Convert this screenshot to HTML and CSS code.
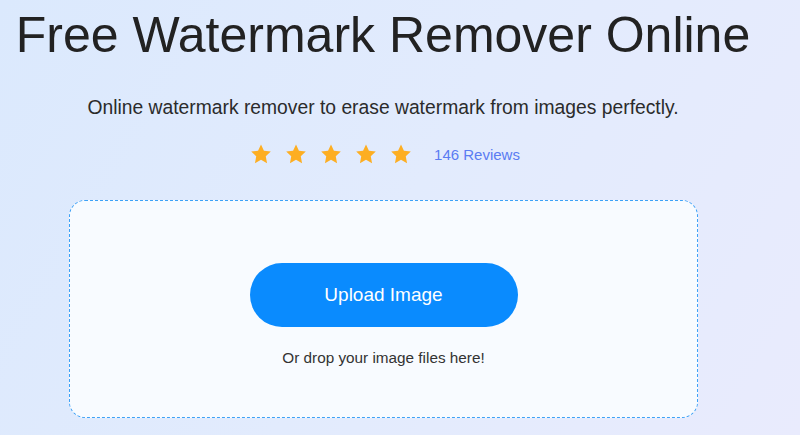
FILE: index.html
```html
<!DOCTYPE html>
<html lang="en">
<head>
    <meta charset="UTF-8">
    <meta name="viewport" content="width=device-width, initial-scale=1.0">
    <title>Free Watermark Remover Online</title>
    <link rel="stylesheet" href="styles.css">
</head>
<body>
    <div class="container">
        <h1>Free Watermark Remover Online</h1>
        <p class="intro">Online watermark remover to erase watermark from images perfectly.</p>

        <div class="rating">
            <div class="stars">
                <svg class="star" viewBox="0 0 24 24"><path d="M12 1.5l3.2 6.9 7.5.9-5.5 5.2 1.4 7.5L12 18.3 5.4 22l1.4-7.5L1.3 9.3l7.5-.9z"/></svg>
                <svg class="star" viewBox="0 0 24 24"><path d="M12 1.5l3.2 6.9 7.5.9-5.5 5.2 1.4 7.5L12 18.3 5.4 22l1.4-7.5L1.3 9.3l7.5-.9z"/></svg>
                <svg class="star" viewBox="0 0 24 24"><path d="M12 1.5l3.2 6.9 7.5.9-5.5 5.2 1.4 7.5L12 18.3 5.4 22l1.4-7.5L1.3 9.3l7.5-.9z"/></svg>
                <svg class="star" viewBox="0 0 24 24"><path d="M12 1.5l3.2 6.9 7.5.9-5.5 5.2 1.4 7.5L12 18.3 5.4 22l1.4-7.5L1.3 9.3l7.5-.9z"/></svg>
                <svg class="star" viewBox="0 0 24 24"><path d="M12 1.5l3.2 6.9 7.5.9-5.5 5.2 1.4 7.5L12 18.3 5.4 22l1.4-7.5L1.3 9.3l7.5-.9z"/></svg>
            </div>
            <a href="#" class="reviews">146 Reviews</a>
        </div>

        <div class="upload-box">
            <button class="upload-btn">Upload Image</button>
            <p class="drop-hint">Or drop your image files here!</p>
        </div>
    </div>
</body>
</html>
```

FILE: styles.css
```css
body {
    font-family: "Liberation Sans", Arial, sans-serif;
    margin: 0;
    padding: 0;
    height: 435px;
    overflow: hidden;
    background: linear-gradient(120deg, #dbe9fd 0%, #e2ebfd 50%, #e9ebfd 100%);
    color: #222;
}

.container {
    width: 766px;
    text-align: center;
}

h1 {
    font-size: 50px;
    font-weight: normal;
    margin: 0;
    padding-top: 7px;
    line-height: 56px;
    color: #222;
    white-space: nowrap;
}

.intro {
    font-size: 19.3px;
    margin: 33px 0 0;
    line-height: 24px;
    color: #2b2b2b;
}

.rating {
    display: flex;
    justify-content: center;
    align-items: center;
    gap: 22px;
    margin-top: 23px;
    padding-left: 4px;
}

.stars {
    display: flex;
    gap: 13px;
}

.star {
    width: 22px;
    height: 22px;
    fill: #fdae22;
}

.reviews {
    font-size: 15px;
    color: #5a7cf2;
    text-decoration: none;
}

.upload-box {
    margin: 35px 0 0 69px;
    width: 627px;
    height: 216px;
    border: 1px dashed #3ea2f7;
    border-radius: 16px;
    background: #f8fbff;
    display: flex;
    flex-direction: column;
    align-items: center;
}

.upload-btn {
    margin-top: 62px;
    width: 268px;
    height: 64px;
    border: none;
    border-radius: 32px;
    background-color: #0a8bfe;
    color: white;
    font-family: "Liberation Sans", Arial, sans-serif;
    font-size: 19px;
    cursor: pointer;
}

.drop-hint {
    margin: 22px 0 0;
    font-size: 15.3px;
    color: #333;
}
```
